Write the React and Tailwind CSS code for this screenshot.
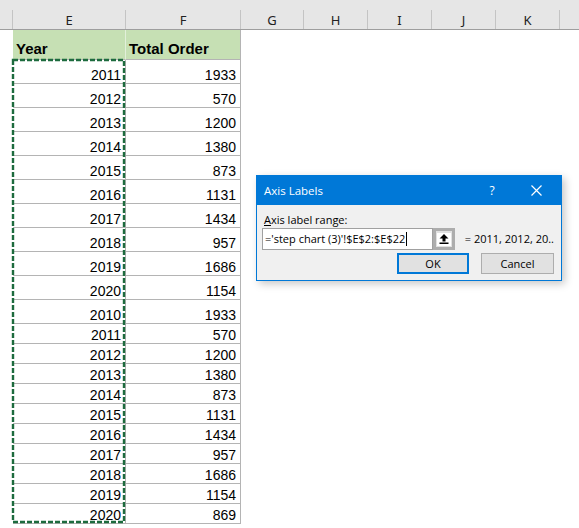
const COLS = [
  ['', 'w-[13px]'],
  ['E', 'w-[113px]'],
  ['F', 'w-[115px]'],
  ['G', 'w-[63px]'],
  ['H', 'w-[64px]'],
  ['I', 'w-[64px]'],
  ['J', 'w-[64px]'],
  ['K', 'w-[64px]'],
];

const ROWS = [
  [2011, 1933], [2012, 570], [2013, 1200], [2014, 1380], [2015, 873],
  [2016, 1131], [2017, 1434], [2018, 957], [2019, 1686], [2020, 1154],
  [2010, 1933], [2011, 570], [2012, 1200], [2013, 1380], [2014, 873],
  [2015, 1131], [2016, 1434], [2017, 957], [2018, 1686], [2019, 1154],
  [2020, 869],
];

function UploadArrow() {
  return (
    <svg width="12" height="12" viewBox="0 0 12 12">
      <polygon points="6,1 1.5,5.5 4.5,5.5 4.5,8.5 7.5,8.5 7.5,5.5 10.5,5.5" fill="#000" />
      <rect x="1.5" y="9.5" width="9" height="1.5" fill="#000" />
    </svg>
  );
}

function AxisDialog() {
  return (
    <div className="absolute left-[256px] top-[175px] w-[306px] border border-[#0078d7] bg-[#f0f0f0] shadow-[3px_3px_8px_rgba(0,0,0,0.22)] font-['Open_Sans',sans-serif] text-[11px] text-black">
      <div className="h-[29px] bg-[#0078d7] flex items-center pl-[7px] text-white text-[11.5px]">
        <span className="flex-1">Axis Labels</span>
        <span className="w-[20px] text-center mr-[29px] text-[12px]">?</span>
        <svg width="11" height="11" viewBox="0 0 11 11" className="mr-[19px]">
          <path d="M0.5 0.5 L10.5 10.5 M10.5 0.5 L0.5 10.5" stroke="#fff" strokeWidth="1.2" />
        </svg>
      </div>
      <div className="pl-[5px] pr-[7px] pt-[7px] pb-[6px]">
        <div className="ml-[2px] leading-[16px]">
          <span className="underline">A</span>xis label range:
        </div>
        <div className="flex items-center h-[22px]">
          <div className="w-[178px] h-full bg-white border border-[#a0a0a0] flex items-center pl-[2px] whitespace-nowrap">
            <span>='step chart (3)'!$E$2:$E$22</span>
            <span className="w-px h-[14px] bg-black ml-px" />
          </div>
          <div className="w-[22px] h-full bg-[#e1e1e1] border-[3px] border-[#adadad] flex items-center justify-center">
            <div className="w-[14px] h-[13px] bg-white flex items-center justify-center">
              <UploadArrow />
            </div>
          </div>
          <span className="ml-[10px] whitespace-nowrap">= 2011, 2012, 20..</span>
        </div>
        <div className="flex justify-end gap-[12px] mt-[3px]">
          <button className="w-[72px] h-[21px] bg-[#e1e1e1] border-2 border-[#0078d7] leading-none">OK</button>
          <button className="w-[73px] h-[21px] bg-[#e1e1e1] border border-[#adadad] leading-none">Cancel</button>
        </div>
      </div>
    </div>
  );
}

export default function App() {
  return (
    <div className="relative w-[579px] h-[528px] overflow-hidden bg-white">
      <div className="h-[30px] bg-[#e6e6e6] border-b border-[#9e9e9e] flex items-end">
        {COLS.map(([label, w]) => (
          <div key={label || 'corner'} className={`${w} h-[19px] border-r border-[#c4c4c4] flex items-center justify-center text-[13px] text-[#222] font-['Noto_Sans',sans-serif] leading-none pt-px`}>
            {label}
          </div>
        ))}
      </div>

      <div className="font-['Liberation_Sans',Arial,sans-serif] text-black">
        <div className="flex h-[30px]">
          <div className="w-[13px]" />
          <div className="w-[113px] bg-[#c6e0b4] border-r border-[#e2efda] border-b border-b-[#b4b4b4] flex items-end pl-[3px] pb-[1px] text-[15px] font-bold leading-[18px]">
            Year
          </div>
          <div className="w-[115px] bg-[#c6e0b4] border-r border-[#b4b4b4] border-b border-b-[#b4b4b4] flex items-end pl-[3px] pb-[1px] text-[15px] font-bold leading-[18px]">
            Total Order
          </div>
        </div>
        {ROWS.map(([year, total], i) => (
          <div key={i} className={`flex ${i < 11 ? 'h-[24px]' : 'h-[20px]'}`}>
            <div className="w-[13px]" />
            <div className="w-[113px] border-r border-b border-[#b4b4b4] flex items-end justify-end pr-[4px] text-[14px] leading-[16px]">
              {year}
            </div>
            <div className="w-[115px] border-r border-b border-[#b4b4b4] flex items-end justify-end pr-[4px] text-[14px] leading-[16px]">
              {total}
            </div>
          </div>
        ))}
      </div>

      <svg className="absolute left-0 top-0 pointer-events-none" width="579" height="528">
        <rect x="13" y="60" width="111" height="462" fill="none" stroke="#1d6b3e" strokeWidth="2.4" strokeDasharray="5 2" />
      </svg>

      <AxisDialog />
    </div>
  );
}
